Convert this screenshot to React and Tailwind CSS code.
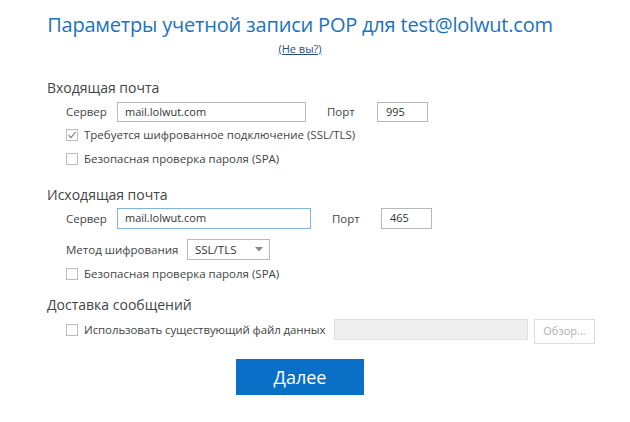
export default function App() {
  const font = { fontFamily: '"Open Sans", "Noto Sans", sans-serif' };

  const Check = ({ checked }) => (
    <span className="w-[12px] h-[12px] border border-[#bcbcbc] bg-white flex items-center justify-center shrink-0">
      {checked && (
        <svg width="10" height="10" viewBox="0 0 10 10">
          <path d="M1.5 5.2 L4 7.6 L8.6 2" fill="none" stroke="#777" strokeWidth="1.1" />
        </svg>
      )}
    </span>
  );

  return (
    <div className="w-[630px] h-[422px] bg-white text-[#444]" style={font}>
      <div className="w-[600px] flex flex-col">
        {/* Header */}
        <div className="flex flex-col items-center pt-[11px]">
          <h1 className="text-[20px] leading-[28px] text-[#1b72bd] tracking-[-0.2px]">
            Параметры учетной записи POP для test@lolwut.com
          </h1>
          <a href="#" className="mt-[3px] text-[11px] leading-[14px] text-[#2a4f7c] underline">
            (Не вы?)
          </a>
        </div>

        <div className="pl-[47px] flex flex-col">
          {/* Incoming */}
          <div className="mt-[22px] text-[14px] leading-[20px] text-[#444]">Входящая почта</div>
          <div className="pl-[19px] flex flex-col">
            <div className="mt-[4px] h-[20px] flex items-center text-[11.5px]">
              <span className="w-[51px]">Сервер</span>
              <div className="w-[189px] h-[20px] border border-[#b8b8b8] px-[7px] flex items-center text-[11px] text-[#333]">
                mail.lolwut.com
              </div>
              <span className="ml-[21px] w-[50px]">Порт</span>
              <div className="w-[51px] h-[20px] border border-[#b8b8b8] px-[8px] flex items-center text-[11px] text-[#333]">
                995
              </div>
            </div>
            <label className="mt-[2px] h-[21px] flex items-center gap-[6px] text-[11.5px]">
              <Check checked />
              Требуется шифрованное подключение (SSL/TLS)
            </label>
            <label className="mt-[3px] h-[21px] flex items-center gap-[6px] text-[11.5px]">
              <Check />
              Безопасная проверка пароля (SPA)
            </label>
          </div>

          {/* Outgoing */}
          <div className="mt-[16px] text-[14px] leading-[20px] text-[#444]">Исходящая почта</div>
          <div className="pl-[19px] flex flex-col">
            <div className="mt-[3px] h-[21px] flex items-center text-[11.5px]">
              <span className="w-[51px]">Сервер</span>
              <div className="w-[194px] h-[21px] border border-[#7fb4e0] px-[7px] flex items-center text-[11px] text-[#333]">
                mail.lolwut.com
              </div>
              <span className="ml-[21px] w-[49px]">Порт</span>
              <div className="w-[51px] h-[21px] border border-[#b8b8b8] px-[8px] flex items-center text-[11px] text-[#333]">
                465
              </div>
            </div>
            <div className="mt-[10px] h-[21px] flex items-center text-[11.5px]">
              <span className="w-[121px]">Метод шифрования</span>
              <div className="w-[83px] h-[21px] border border-[#b8b8b8] pl-[7px] pr-[6px] flex items-center justify-between text-[11.5px] text-[#333]">
                SSL/TLS
                <svg width="8" height="5" viewBox="0 0 8 5">
                  <path d="M0 0 H8 L4 4.5 Z" fill="#888" />
                </svg>
              </div>
            </div>
            <label className="mt-[3px] h-[21px] flex items-center gap-[6px] text-[11.5px]">
              <Check />
              Безопасная проверка пароля (SPA)
            </label>
          </div>

          {/* Delivery */}
          <div className="mt-[11px] text-[14px] leading-[20px] text-[#444]">Доставка сообщений</div>
          <div className="pl-[19px] flex items-start mt-[4px] text-[11.5px]">
            <label className="h-[21px] flex items-center gap-[6px] w-[268px] whitespace-nowrap tracking-[-0.1px]">
              <Check />
              Использовать существующий файл данных
            </label>
            <div className="w-[194px] h-[21px] bg-[#efefef] border border-[#e0e0e0]" />
            <button className="ml-[6px] w-[61px] h-[25px] border border-[#dcdcdc] bg-white text-[11px] text-[#b0b0b0]">
              Обзор...
            </button>
          </div>
        </div>

        {/* Next */}
        <div className="flex justify-center mt-[15px]">
          <button className="w-[128px] h-[36px] bg-[#0a6fc6] text-white text-[18px]">
            Далее
          </button>
        </div>
      </div>
    </div>
  );
}
